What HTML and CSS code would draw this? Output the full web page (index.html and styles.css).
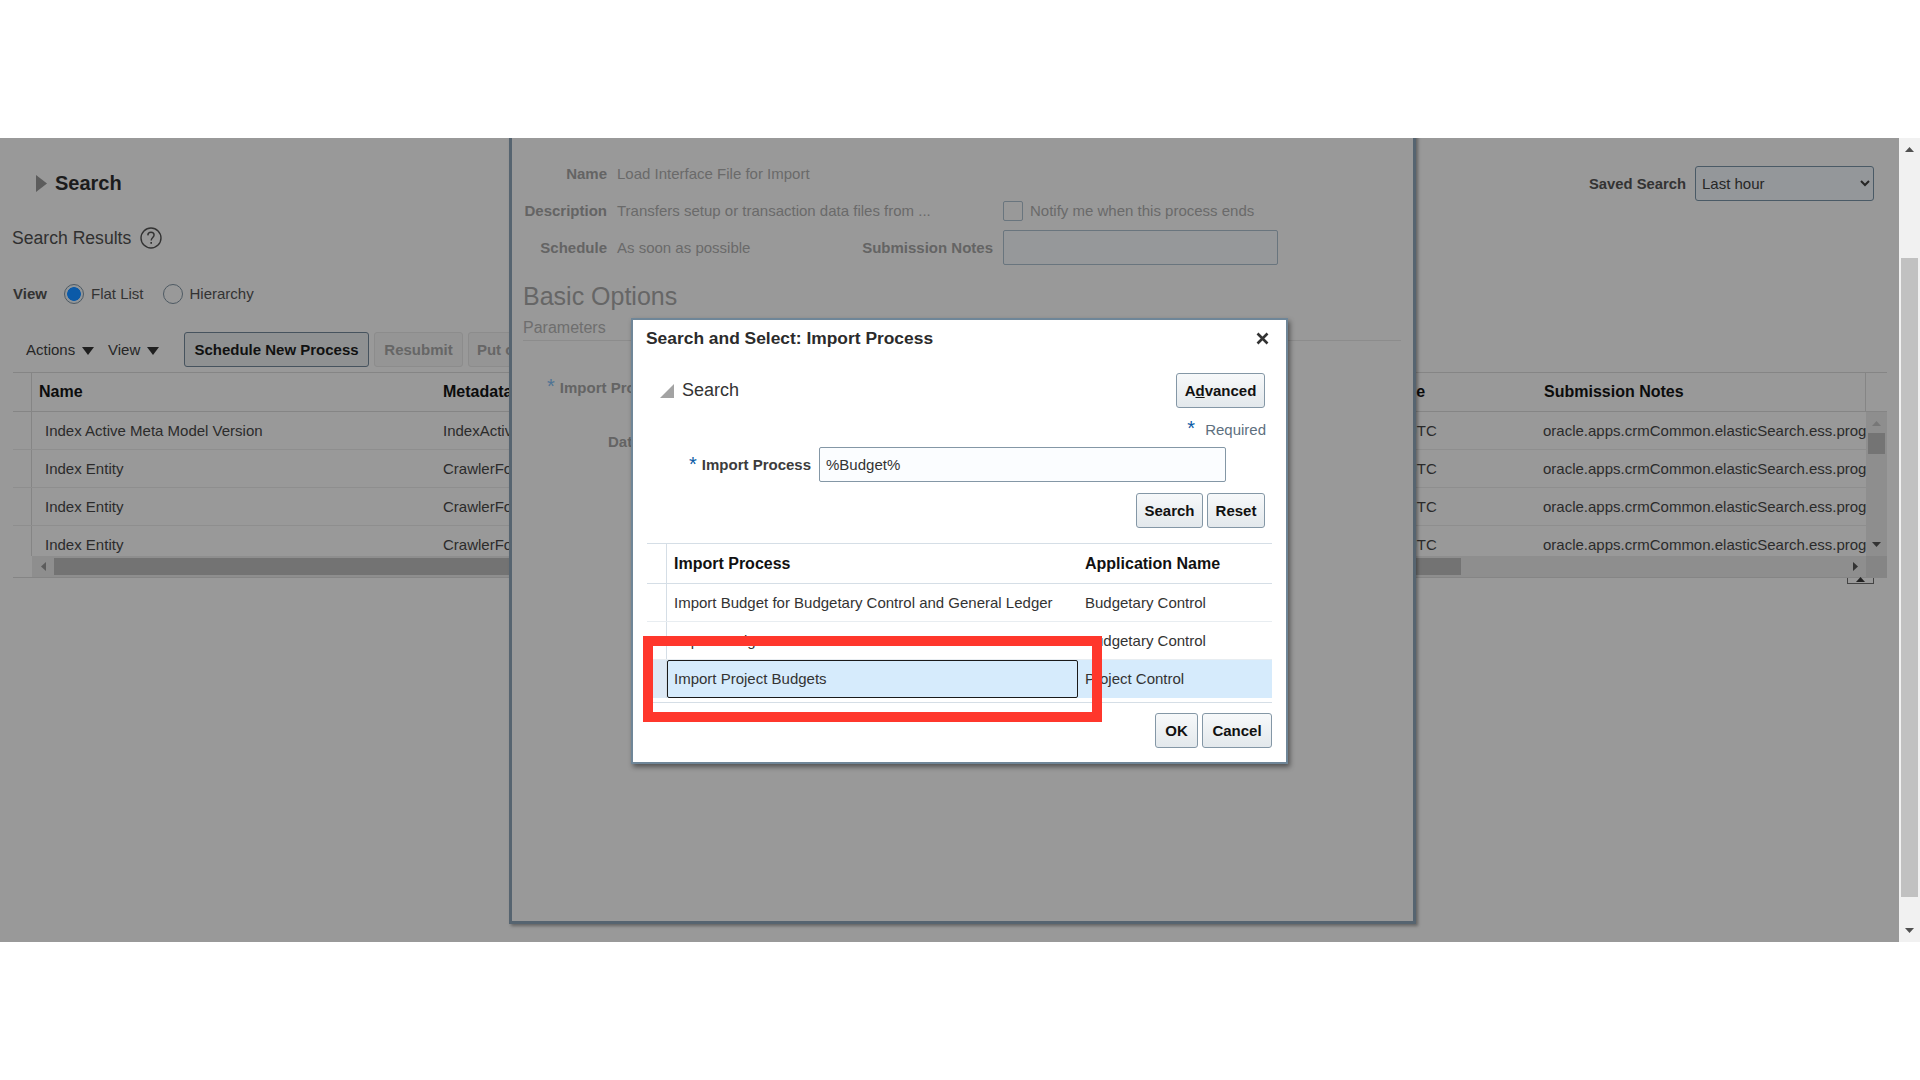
FILE: index.html
```html
<!DOCTYPE html>
<html lang="en">
<head>
  <meta charset="UTF-8" />
  <title>Scheduled Processes</title>
  <link rel="stylesheet" href="styles.css">
</head>
<body>
  <div class="band"></div>
  <div class="viewport">
    <div class="page">
      <div class="search-bar">
        <svg class="tri" width="11" height="17" viewBox="0 0 11 17"><path d="M0 0L11 8.5L0 17Z" fill="#5c5c5c"/></svg>
        <span class="search-title">Search</span>
        <label class="saved-label" for="savedSearch">Saved Search</label>
        <select id="savedSearch" class="saved-select"><option>Last hour</option></select>
      </div>

      <div class="results-title">
        <span>Search Results</span>
        <svg width="22" height="22" viewBox="0 0 22 22"><circle cx="11" cy="11" r="10" fill="none" stroke="#333" stroke-width="1.4"/><path d="M7.8 8.4C7.9 6.4 9.3 5.3 11 5.3C12.8 5.3 14.1 6.5 14.1 8.1C14.1 10.3 11.2 10.7 11.2 13.4" fill="none" stroke="#333" stroke-width="1.4"/><rect x="10.4" y="15" width="1.6" height="1.8" fill="#333"/></svg>
      </div>

      <div class="view-row">
        <span class="view-label">View</span>
        <span class="radio checked"></span><span class="radio-text">Flat List</span>
        <span class="radio second"></span><span class="radio-text">Hierarchy</span>
      </div>

      <div class="toolbar">
        <span class="menu">Actions <i class="caret"></i></span>
        <span class="menu view-menu">View <i class="caret"></i></span>
        <button class="tool-btn primary">Schedule New Process</button>
        <button class="tool-btn off">Resubmit</button>
        <button class="tool-btn off wide">Put on Hold</button>
      </div>

      <div class="grid">
        <div class="grid-head">
          <div class="stub"></div>
          <div class="h-name">Name</div>
          <div class="h-meta">Metadata</div>
          <div class="h-zone">Time</div>
          <div class="h-notes">Submission Notes</div>
        </div>
        <div class="grid-body">
          <div class="rows">
            <div class="row"><div class="stub"></div><div class="c-name">Index Active Meta Model Version</div><div class="c-meta">IndexActive</div><div class="c-zone">UTC</div><div class="c-notes">oracle.apps.crmCommon.elasticSearch.ess.prog</div></div>
            <div class="row"><div class="stub"></div><div class="c-name">Index Entity</div><div class="c-meta">CrawlerFor</div><div class="c-zone">UTC</div><div class="c-notes">oracle.apps.crmCommon.elasticSearch.ess.prog</div></div>
            <div class="row"><div class="stub"></div><div class="c-name">Index Entity</div><div class="c-meta">CrawlerFor</div><div class="c-zone">UTC</div><div class="c-notes">oracle.apps.crmCommon.elasticSearch.ess.prog</div></div>
            <div class="row"><div class="stub"></div><div class="c-name">Index Entity</div><div class="c-meta">CrawlerFor</div><div class="c-zone">UTC</div><div class="c-notes">oracle.apps.crmCommon.elasticSearch.ess.prog</div></div>
          </div>
          <div class="vscroll">
            <svg class="v-up" width="9" height="5" viewBox="0 0 9 5"><path d="M4.5 0L9 5H0Z" fill="#777"/></svg>
            <div class="v-thumb"></div>
            <svg class="v-down" width="9" height="5" viewBox="0 0 9 5"><path d="M0 0H9L4.5 5Z" fill="#333"/></svg>
          </div>
        </div>
        <div class="hscroll">
          <div class="h-spacer"></div>
          <div class="h-track">
            <svg class="h-left" width="5" height="9" viewBox="0 0 5 9"><path d="M5 0V9L0 4.5Z" fill="#5c5c5c"/></svg>
            <div class="h-thumb"></div>
            <svg class="h-right" width="5" height="9" viewBox="0 0 5 9"><path d="M0 0L5 4.5L0 9Z" fill="#333"/></svg>
          </div>
          <div class="h-corner"></div>
        </div>
      </div>
      <div class="pager-wrap"><div class="pager"><svg width="9" height="5" viewBox="0 0 9 5"><path d="M4.5 0L9 5H0Z" fill="#222"/></svg></div></div>

      <div class="panel">
        <div class="panel-form">
          <span class="p-label">Name</span><span class="p-value">Load Interface File for Import</span><span></span><span></span>
          <span class="p-label">Description</span><span class="p-value">Transfers setup or transaction data files from ...</span>
          <span></span><span class="notify"><i class="check"></i>Notify me when this process ends</span>
          <span class="p-label">Schedule</span><span class="p-value">As soon as possible</span>
          <span class="p-label">Submission Notes</span><div class="p-notes"></div>
        </div>
        <div class="basic-title">Basic Options</div>
        <div class="param-title">Parameters</div>
        <div class="param-row"><span class="p-star">*</span><span class="p-label">Import Pro</span></div>
        <div class="param-row data-row"><span class="p-label">Dat</span></div>
      </div>
    </div>
    <div class="scrollbar">
      <svg class="sb-up" width="9" height="5" viewBox="0 0 9 5"><path d="M4.5 0L9 5H0Z" fill="#505050"/></svg>
      <div class="sb-thumb"></div>
      <svg class="sb-down" width="9" height="5" viewBox="0 0 9 5"><path d="M0 0H9L4.5 5Z" fill="#505050"/></svg>
    </div>

    <div class="modal">
      <div class="modal-title">
        <span>Search and Select: Import Process</span>
        <svg width="13" height="13" viewBox="0 0 13 13"><path d="M1.5 1.5L11.5 11.5M11.5 1.5L1.5 11.5" stroke="#333" stroke-width="2.6"/></svg>
      </div>
      <div class="modal-search">
        <svg width="14" height="14" viewBox="0 0 14 14"><path d="M14 0V14H0Z" fill="#a3a3a3"/></svg>
        <span class="ms-title">Search</span>
        <button class="btn adv">A<u>d</u>vanced</button>
      </div>
      <div class="required"><span class="star">*</span>Required</div>
      <div class="field">
        <span class="star">*</span><label for="importProcess">Import Process</label>
        <input id="importProcess" value="%Budget%">
      </div>
      <div class="search-btns"><button class="btn">Search</button><button class="btn">Reset</button></div>
      <div class="pick">
        <div class="pick-row pick-head"><div class="pick-stub"></div><div>Import Process</div><div>Application Name</div></div>
        <div class="pick-row"><div class="pick-stub"></div><div>Import Budget for Budgetary Control and General Ledger</div><div>Budgetary Control</div></div>
        <div class="pick-row"><div class="pick-stub"></div><div>Import Budget Amounts</div><div>Budgetary Control</div></div>
        <div class="pick-row selected"><div class="pick-stub"></div><div class="focus">Import Project Budgets</div><div>Project Control</div></div>
      </div>
      <div class="modal-foot"><button class="btn">OK</button><button class="btn">Cancel</button></div>
    </div>
    <div class="callout"></div>
  </div>
  <div class="band"></div>
</body>
</html>
```

FILE: styles.css
```css
* {
  box-sizing: border-box;
}
body {
  margin: 0;
  font-family: "Liberation Sans", Arial, sans-serif;
  background: #fff;
  color: #262626;
  overflow: hidden;
}
button {
  font-family: inherit;
}
.band {
  height: 138px;
  background: #fff;
}
.viewport {
  position: relative;
  display: flex;
  height: 804px;
}
.page {
  position: relative;
  flex: 1;
  background: #999;
  overflow: hidden;
}
.scrollbar {
  position: relative;
  width: 21px;
  background: #f1f1f1;
}
.sb-up, .sb-down {
  position: absolute;
  left: 6px;
}
.sb-up {
  top: 9px;
}
.sb-down {
  top: 790px;
}
.sb-thumb {
  position: absolute;
  left: 2px;
  top: 120px;
  width: 17px;
  height: 639px;
  background: #c1c1c1;
}

/* search header */
.search-bar {
  display: flex;
  align-items: center;
  height: 35px;
  margin-top: 28px;
  padding: 0 25px 0 36px;
}
.search-title {
  margin-left: 8px;
  font-size: 20px;
  font-weight: bold;
  color: #1c1c1c;
}
.saved-label {
  margin-left: auto;
  font-size: 14.8px;
  font-weight: bold;
  color: #333;
}
.saved-select {
  width: 179px;
  height: 35px;
  margin-left: 9px;
  padding-left: 2px;
  font: 15px "Liberation Sans", Arial, sans-serif;
  color: #262626;
  background: #94979a;
  border: 1px solid #4a5a66;
  border-radius: 3px;
}
.results-title {
  display: flex;
  align-items: center;
  gap: 9px;
  height: 30px;
  margin: 22px 0 0 12px;
  font-size: 17.6px;
  color: #303030;
}
.view-row {
  display: flex;
  align-items: center;
  height: 24px;
  margin: 29px 0 0 13px;
  font-size: 15px;
}
.view-label {
  width: 51px;
  padding-bottom: 2px;
  font-weight: bold;
  color: #333;
}
.radio {
  width: 20px;
  height: 20px;
  border: 1px solid #4e5a63;
  border-radius: 50%;
}
.radio.checked {
  background: radial-gradient(circle, #0b5aa8 0 6.5px, #929699 7.2px);
}
.radio.second {
  margin-left: 19px;
}
.radio-text {
  margin-left: 7px;
  padding-bottom: 2px;
  color: #333;
}
.toolbar {
  display: flex;
  align-items: center;
  height: 35px;
  margin: 26px 0 0 26px;
  font-size: 15px;
}
.menu {
  width: 82px;
  color: #262626;
}
.view-menu {
  width: 76px;
}
.caret {
  display: inline-block;
  width: 0;
  height: 0;
  margin-left: 3px;
  border: 6px solid transparent;
  border-top: 8px solid #1f1f1f;
  border-bottom: 0;
}
.tool-btn {
  height: 35px;
  margin-right: 5px;
  padding: 0;
  font-size: 15px;
  font-weight: bold;
  border-radius: 3px;
  flex: none;
}
.tool-btn.primary {
  width: 185px;
  color: #111;
  background: #8f9192;
  border: 1px solid #46535e;
}
.tool-btn.off {
  width: 89px;
  color: #666;
  background: #959595;
  border: 1px solid #8c8c8c;
}
.tool-btn.off.wide {
  width: 102px;
}

/* results table */
.grid {
  width: 1874px;
  margin: 5px 0 0 13px;
  font-size: 15px;
}
.grid-head, .row {
  display: grid;
  grid-template-columns: 19px 401px 952px 151px 330px;
}
.grid-head {
  height: 40px;
  align-items: center;
  border-top: 1px solid #858585;
  border-bottom: 1px solid #858585;
  font-size: 16px;
  font-weight: bold;
  color: #0c0c0c;
}
.grid-head > div {
  display: flex;
  align-items: center;
  height: 100%;
  padding-bottom: 1px;
  white-space: nowrap;
}
.grid-head .stub {
  border-right: 1px solid #858585;
}
.h-name {
  padding-left: 7px;
}
.h-meta {
  padding-left: 10px;
}
.h-zone {
  padding-left: 3px;
}
.h-notes {
  padding-left: 8px;
  border-right: 1px solid #858585;
}
.grid-body {
  display: flex;
  height: 144px;
  overflow: hidden;
}
.rows {
  width: 1853px;
}
.row {
  height: 38px;
  align-items: center;
  border-bottom: 1px solid #8e8e8e;
  color: #2b2b2b;
}
.row > div {
  white-space: nowrap;
  overflow: hidden;
}
.row .stub {
  height: 100%;
  border-right: 1px solid #858585;
}
.c-name {
  padding-left: 13px;
}
.c-meta {
  padding-left: 10px;
}
.c-zone {
  padding-left: 21px;
}
.c-notes {
  padding-left: 7px;
}
.vscroll {
  position: relative;
  width: 21px;
  background: #8e8e8e;
}
.v-up, .v-down {
  position: absolute;
  left: 6px;
}
.v-up {
  top: 9px;
}
.v-down {
  top: 130px;
}
.v-thumb {
  position: absolute;
  left: 2px;
  top: 21px;
  width: 17px;
  height: 21px;
  background: #747474;
}
.hscroll {
  display: flex;
  height: 22px;
  border-bottom: 1px solid #858585;
}
.h-spacer {
  width: 19px;
}
.h-track {
  position: relative;
  flex: 1;
  background: #8e8e8e;
}
.h-left, .h-right {
  position: absolute;
  top: 6px;
}
.h-left {
  left: 9px;
}
.h-right {
  right: 8px;
}
.h-thumb {
  position: absolute;
  left: 22px;
  top: 2px;
  width: 1407px;
  height: 17px;
  background: #737373;
}
.h-corner {
  width: 21px;
  background: #858585;
}
.pager-wrap {
  display: flex;
  justify-content: flex-end;
  padding-right: 25px;
}
.pager {
  display: flex;
  justify-content: center;
  align-items: flex-end;
  width: 27px;
  height: 6px;
  border: 1px solid #444;
  border-top: 0;
  padding-bottom: 1px;
}

/* process details window, behind the modal */
.panel {
  position: absolute;
  left: 509px;
  top: -20px;
  width: 907px;
  height: 806px;
  padding: 37px 0 0 12px;
  background: #999;
  border: 3px solid #566470;
  border-top-width: 0;
  box-shadow: 2px 2px 3px rgba(0, 0, 0, 0.35);
  font-size: 15px;
}
.panel-form {
  display: grid;
  grid-template-columns: 83px 198px 168px 275px;
  grid-auto-rows: 37px;
  align-items: center;
  column-gap: 10px;
}
.p-label {
  font-weight: bold;
  color: #646464;
  text-align: right;
  white-space: nowrap;
}
.p-value {
  color: #6a6a6a;
  white-space: nowrap;
}
.notify {
  display: flex;
  align-items: center;
  color: #6a6a6a;
  white-space: nowrap;
}
.check {
  flex: none;
  width: 20px;
  height: 20px;
  margin-right: 7px;
  border: 1px solid #69757e;
  border-radius: 2px;
}
.p-notes {
  width: 275px;
  height: 35px;
  border: 1px solid #69757e;
  border-radius: 2px;
  background: #96989a;
}
.basic-title {
  margin: 16px 0 0 -1px;
  font-size: 25px;
  color: #666;
}
.param-title {
  margin: 8px 12px 0 -1px;
  padding-bottom: 3px;
  font-size: 16px;
  color: #6e6e6e;
  border-bottom: 1px solid #8c8c8c;
}
.param-row {
  display: flex;
  align-items: baseline;
  margin: 34px 0 0 23px;
}
.p-star {
  margin-right: 5px;
  font-size: 20px;
  color: #4f7394;
}
.data-row {
  margin: 35px 0 0 84px;
}

/* search and select modal */
.modal {
  position: absolute;
  left: 631px;
  top: 180px;
  width: 657px;
  height: 446px;
  padding: 0 14px;
  background: #fff;
  border: 2px solid #6f8698;
  box-shadow: 2px 3px 5px rgba(0, 0, 0, 0.45);
  font-size: 15px;
}
.modal-title {
  display: flex;
  justify-content: space-between;
  align-items: center;
  height: 36px;
  margin-left: -1px;
  padding-right: 3px;
  font-size: 17.4px;
  font-weight: bold;
  color: #2b2b2b;
}
.modal-search {
  display: flex;
  align-items: center;
  height: 35px;
  margin-top: 17px;
  padding: 0 7px 0 13px;
}
.ms-title {
  margin-left: 8px;
  font-size: 18px;
  color: #333;
}
.btn {
  height: 35px;
  padding: 0;
  font-size: 15px;
  font-weight: bold;
  color: #111;
  background: linear-gradient(#f7f9fa, #e3e8ec);
  border: 1px solid #8497a6;
  border-radius: 3px;
}
.adv {
  width: 89px;
  margin-left: auto;
}
.required {
  height: 22px;
  margin-top: 9px;
  padding-right: 6px;
  text-align: right;
  color: #5d6f7e;
}
.star {
  margin-right: 10px;
  font-size: 20px;
  color: #0a5aa5;
}
.field {
  display: flex;
  align-items: center;
  height: 35px;
  margin-top: 8px;
  padding-left: 42px;
}
.field .star {
  margin-right: 5px;
}
.field label {
  margin-right: 8px;
  font-weight: bold;
  color: #3c3c3c;
}
.field input {
  width: 407px;
  height: 35px;
  padding: 0 6px;
  font: 15px "Liberation Sans", Arial, sans-serif;
  color: #333;
  background: #fbfdff;
  border: 1px solid #8497a6;
  border-radius: 2px;
}
.search-btns, .modal-foot {
  display: flex;
  justify-content: flex-end;
  gap: 4px;
}
.search-btns {
  margin-top: 11px;
  padding-right: 7px;
}
.search-btns .btn:first-child {
  width: 67px;
}
.search-btns .btn:last-child {
  width: 58px;
}
.pick {
  margin-top: 15px;
  border-top: 1px solid #d5dee6;
  border-bottom: 1px solid #d5dee6;
  padding-bottom: 4px;
}
.pick-row {
  display: grid;
  grid-template-columns: 20px 411px 194px;
  height: 38px;
  border-bottom: 1px solid #e8edf1;
  color: #333;
}
.pick-row > div {
  display: flex;
  align-items: center;
  padding-left: 7px;
  white-space: nowrap;
}
.pick-row .pick-stub {
  border-right: 1px solid #d5dee6;
}
.pick-head {
  height: 40px;
  border-bottom-color: #d5dee6;
  font-size: 16px;
  font-weight: bold;
  color: #111;
}
.selected {
  background: #d6ebfc;
  border-bottom: 0;
}
.selected > div {
  padding-bottom: 2px;
}
.selected .pick-stub {
  background: #dde9f5;
}
.selected .focus {
  padding-left: 6px;
  border: 1px solid #1a1a1a;
  border-radius: 2px;
}
.modal-foot {
  margin-top: 10px;
}
.modal-foot .btn:first-child {
  width: 43px;
}
.modal-foot .btn:last-child {
  width: 70px;
}
.callout {
  position: absolute;
  left: 643px;
  top: 498px;
  width: 459px;
  height: 86px;
  border: 10px solid #ff372c;
}
```
